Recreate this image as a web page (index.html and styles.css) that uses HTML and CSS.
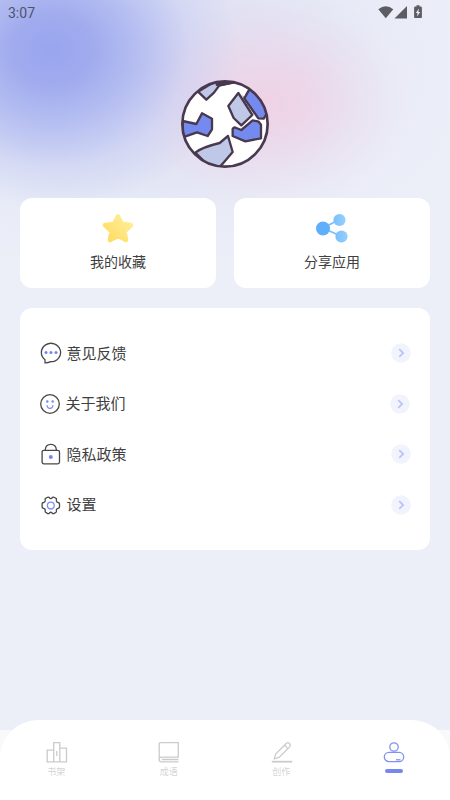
FILE: index.html
```
<!DOCTYPE html>
<html lang="zh-CN">
<head>
<meta charset="utf-8">
<meta name="viewport" content="width=device-width, initial-scale=1">
<title>我的</title>
<link rel="stylesheet" href="styles.css">
</head>
<body>
<div class="app">
  <main class="page">
    <header class="status">
      <span class="time">3:07</span>
      <svg class="status-icons" width="46" height="16" viewBox="0 0 46 16" fill="#5c5d63">
        <path d="M.3 4.200Q7.800-1.600 15.300 4.200L7.800 13.300Z"/>
        <path d="M29 1V13.500H16.500Z"/>
        <path d="M37.300 1.500h1.200V.3h3v1.200h1.200q1.200 0 1.200 1.200v9.200q0 1.200-1.200 1.200h-5.400q-1.200 0-1.200-1.200V2.700q0-1.200 1.200-1.200z"/>
        <path d="M41 3.500L37.800 8h1.800l-.6 3.500L42.200 7h-1.800z" fill="#eceef9"/>
      </svg>
    </header>
    <section class="profile">
      <svg class="globe" width="88" height="88" viewBox="33 30 264 264">
        <defs><clipPath id="disc"><circle cx="165" cy="162" r="129"/></clipPath></defs>
        <circle cx="165" cy="162" r="128" fill="#fff"/>
        <g clip-path="url(#disc)" stroke="#49394f" stroke-width="7" stroke-linejoin="round">
          <path d="M84 65L109 89L132 68L148 46L190 38L150 25Z" fill="#c0c8e8"/>
          <path d="M138 46L150 48L195 38L176 31L140 36Z" fill="#49394f" stroke-width="3"/>
          <path d="M38 153L79 162L96 130L126 146V178L113 198L81 187L38 202Z" fill="#758aef"/>
          <path d="M76 248Q95 232 149 219L174 198L188 246L154 286L130 302Z" fill="#c0c8e8"/>
          <path d="M205 69L247 135L214 166L191 144L175 108Z" fill="#c0c8e8"/>
          <path d="M238 58L223 85L265 145L281 146L291 130Q282 87 238 58Z" fill="#758aef"/>
          <path d="M218 77L253 132" fill="none" stroke-width="2"/>
          <path d="M248 151L266 155L273 164V205L226 214L188 198V177Q191 170 199 174L214 180Z" fill="#758aef"/>
        </g>
        <circle cx="165" cy="162" r="128" fill="none" stroke="#49394f" stroke-width="8"/>
      </svg>
    </section>
    <section class="cards">
      <a class="card">
        <svg width="34" height="32" viewBox="0 0 34 32">
          <defs><linearGradient id="gold" x1="1" y1="0" x2="0" y2="1"><stop offset="0" stop-color="#ffef9c"/><stop offset="1" stop-color="#ffdb60"/></linearGradient></defs>
          <path d="M17 4.500L20.800 11.800L30 13.100L23.400 19.400L25 28L17 24L9 28L10.600 19.400L4 13.100L13.200 11.800Z" fill="url(#gold)" stroke="url(#gold)" stroke-width="4.600" stroke-linejoin="round"/>
        </svg>
        <span>我的收藏</span>
      </a>
      <a class="card">
        <svg width="34" height="32" viewBox="0 0 34 32">
          <defs><linearGradient id="sky" x1="0" y1="0" x2="1" y2="0"><stop offset="0" stop-color="#7abffd"/><stop offset="1" stop-color="#95d0fe"/></linearGradient></defs>
          <path d="M8 16L24.500 7.500M8 16L26.500 24.500" stroke="#79bcfd" stroke-width="1.700"/>
          <circle cx="8" cy="16.500" r="7" fill="#60affc"/>
          <circle cx="24.500" cy="8" r="6.100" fill="url(#sky)"/>
          <circle cx="26.500" cy="24.500" r="6.100" fill="url(#sky)"/>
        </svg>
        <span>分享应用</span>
      </a>
    </section>
    <nav class="menu">
      <a class="row">
        <svg class="icon" width="22" height="22" viewBox="0 0 22 22"><path d="M5 17.700A9.600 9.200 0 1 1 10.800 19.700Q8 21 5 20.900Z"/><g class="dots"><circle cx="6" cy="10.500" r="1.500"/><circle cx="11" cy="10.500" r="1.500"/><circle cx="16" cy="10.500" r="1.500"/></g></svg>
        <span class="label">意见反馈</span>
        <svg class="go" width="20" height="20" viewBox="0 0 20 20"><circle cx="10" cy="10" r="9.800"/><path d="M8.200 6.200L12.200 10L8.200 13.800"/></svg>
      </a>
      <a class="row shift">
        <svg class="icon" width="22" height="22" viewBox="0 0 22 22"><circle cx="11" cy="11" r="9.300"/><g class="dots"><circle cx="8.300" cy="8.500" r="1.200"/><circle cx="13.700" cy="8.500" r="1.200"/></g><path class="accent" d="M8 12.200Q8.300 15.300 11 15.300T14 12.200"/></svg>
        <span class="label">关于我们</span>
        <svg class="go" width="20" height="20" viewBox="0 0 20 20"><circle cx="10" cy="10" r="9.800"/><path d="M8.200 6.200L12.200 10L8.200 13.800"/></svg>
      </a>
      <a class="row">
        <svg class="icon" width="22" height="22" viewBox="0 0 22 22"><rect x="2.100" y="7.300" width="17.400" height="13.500" rx="1.700"/><path d="M5.200 7C5.800-.4 15.800-.4 16.400 7"/><circle class="fill" cx="10.800" cy="14" r="2"/></svg>
        <span class="label">隐私政策</span>
        <svg class="go" width="20" height="20" viewBox="0 0 20 20"><circle cx="10" cy="10" r="9.800"/><path d="M8.200 6.200L12.200 10L8.200 13.800"/></svg>
      </a>
      <a class="row">
        <svg class="icon" width="22" height="22" viewBox="0 0 22 22"><path d="M7.600 3.300Q8.900 2.700 9.600 4Q10.800 5.200 12 4Q12.700 2.700 14 3.300L16.200 4.500Q16.700 5.200 16.300 6.500Q16.300 8.200 18 8.500Q19.300 8.700 19.500 9.700V13Q19.300 14 18 14.300Q16.300 14.600 16.300 16.300Q16.700 17.600 16 18.300L13.900 19.600Q12.700 20 12 18.800Q10.800 17.600 9.600 18.800Q8.900 20 7.700 19.600L5.600 18.300Q4.900 17.600 5.300 16.300Q5.300 14.600 3.600 14.300Q2.300 14 2.100 13V9.700Q2.300 8.700 3.600 8.500Q5.300 8.200 5.300 6.500Q4.900 5.200 5.400 4.500Z"/><circle class="accent" cx="10.800" cy="11.600" r="3.400"/></svg>
        <span class="label">设置</span>
        <svg class="go" width="20" height="20" viewBox="0 0 20 20"><circle cx="10" cy="10" r="9.800"/><path d="M8.200 6.200L12.200 10L8.200 13.800"/></svg>
      </a>
    </nav>
  </main>
  <footer class="tabs">
    <a class="tab">
      <svg width="22" height="22" viewBox="0 0 22 22"><path d="M1.200 20.800V9.200H7.700V20.800ZM7.700 20.800V1.700H13.800V20.800ZM13.800 20.800V7.200H20.500V20.800ZM10.800 10V15"/></svg>
      <span>书架</span>
    </a>
    <a class="tab">
      <svg width="22" height="22" viewBox="0 0 22 22"><path d="M1.200 18.200V3Q1.200 1.700 2.500 1.700H20.300V16.200H3.500Q1.200 16.200 1.200 18.500T3.500 20.800H20.500M4 18.500H20.500"/></svg>
      <span>成语</span>
    </a>
    <a class="tab">
      <svg width="22" height="22" viewBox="0 0 22 22"><path d="M3.300 17.800L4.600 13L15.500 2.200Q17 1 18.500 2.500T18.900 5.600L8 16.500ZM13.700 4.300L17 7.600"/><path d="M.8 20.700H21.200" stroke-width="1.800"/></svg>
      <span>创作</span>
    </a>
    <a class="tab active">
      <svg width="22" height="22" viewBox="0 0 22 22"><circle cx="11" cy="6" r="4.200"/><rect x="1.300" y="11.400" width="19.400" height="9.200" rx="4.600"/><path d="M13 18.800H17.500"/></svg>
      <i class="bar"></i>
    </a>
  </footer>
</div>
</body>
</html>
```
FILE: styles.css
```
* { box-sizing: border-box; }

body {
  margin: 0;
  background: #f9f9fb;
  color: #404040;
  font-family: "Noto Sans CJK SC", sans-serif;
}

.app {
  display: flex;
  flex-direction: column;
  height: 800px;
  overflow: hidden;
}

.page {
  flex: 0 0 730px;
  padding: 0 20px;
  background:
    radial-gradient(ellipse 185px 160px at 52px 50px, #99a5ee 0%, rgba(154, 166, 238, .9) 22%, rgba(162, 174, 240, .6) 50%, rgba(178, 188, 242, .26) 74%, rgba(200, 208, 245, 0) 100%),
    radial-gradient(ellipse 165px 125px at 268px 102px, #efd2e5 0%, rgba(239, 211, 230, .82) 22%, rgba(237, 216, 233, .42) 55%, rgba(236, 224, 240, .14) 80%, rgba(236, 230, 245, 0) 100%),
    radial-gradient(ellipse 360px 200px at 120px 70px, #d9dcf3 0%, rgba(220, 223, 243, .8) 45%, rgba(228, 231, 246, .4) 75%, rgba(236, 239, 248, 0) 100%),
    #eceff8;
}

.status {
  display: flex;
  justify-content: space-between;
  height: 24px;
  margin: 0 6px 0 -12px;
  padding-top: 5px;
}

.time {
  color: #50536c;
  font: 14px/16px Roboto, sans-serif;
}

.profile {
  display: flex;
  justify-content: center;
  height: 174px;
  padding-top: 56px;
}

.cards {
  display: grid;
  grid-template-columns: 1fr 1fr;
  gap: 18px;
}

.card {
  display: flex;
  flex-direction: column;
  align-items: center;
  height: 90px;
  padding-top: 14px;
  border-radius: 12px;
  background: #fff;
  font-size: 14px;
  line-height: 20px;
}

.card span { margin-top: 7px; }

.menu {
  height: 242px;
  margin-top: 20px;
  padding: 20px;
  border-radius: 12px;
  background: #fff;
}

.row {
  display: flex;
  align-items: center;
  height: 50.5px;
}

.row.shift { margin-left: -1px; margin-right: 1px; }

.label {
  flex: 1;
  padding: 0 0 1px 4.5px;
  font-size: 15px;
  line-height: 22px;
}

.icon { fill: none; stroke: #484848; stroke-width: 1.3; }
.icon .dots, .icon .fill { fill: #7286f3; stroke: none; }
.icon .accent { stroke: #7d8ff4; stroke-width: 1.3; }

.go { margin-right: -.5px; }
.go circle { fill: #f2f4fd; }
.go path { fill: none; stroke: #bcc4f7; stroke-width: 1.8; }

.tabs {
  display: grid;
  grid-template-columns: repeat(4, 1fr);
  flex: 0 0 80px;
  margin-top: -10px;
  padding-top: 21px;
  border-radius: 38px 38px 0 0;
  background: #fff;
}

.tab {
  display: flex;
  flex-direction: column;
  align-items: center;
  color: #c4c4c4;
  font-size: 9px;
  font-weight: 300;
  line-height: 12px;
}

.tab span { margin-top: 3px; }
.tab svg { margin-left: 1px; fill: none; stroke: #cbcbcb; stroke-width: 1.3; }
.tab.active svg { margin-left: 0; stroke: #8191f2; }

.bar {
  width: 18px;
  height: 4px;
  margin-top: 5.5px;
  border-radius: 2px;
  background: #7588f0;
}
```
